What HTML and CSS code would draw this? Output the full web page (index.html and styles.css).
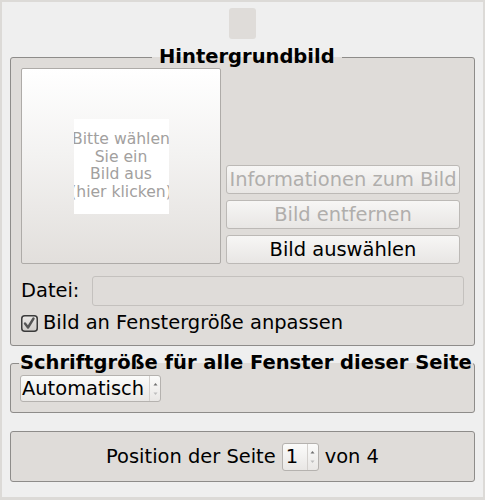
FILE: index.html
```html
<!DOCTYPE html>
<html lang="de">
<head>
<meta charset="utf-8">
<title>Hintergrundbild</title>
<link rel="stylesheet" href="styles.css">
</head>
<body>
<div class="window">
  <div class="top-square"></div>

  <fieldset class="group group-bg">
    <legend class="legend-center">Hintergrundbild</legend>
    <div class="row-top">
      <div class="picture">
        <div class="picture-label">
          <div class="pl-line"><span>Bitte wählen</span></div>
          <div class="pl-line"><span>Sie ein</span></div>
          <div class="pl-line"><span>Bild aus</span></div>
          <div class="pl-line"><span>(hier klicken)</span></div>
        </div>
      </div>
      <div class="buttons">
        <div class="btn disabled">Informationen zum Bild</div>
        <div class="btn disabled">Bild entfernen</div>
        <div class="btn">Bild auswählen</div>
      </div>
    </div>
    <div class="file-row">
      <span class="file-label">Datei:</span>
      <div class="file-input"></div>
    </div>
    <div class="check-row">
      <svg class="checkbox" width="17" height="17" viewBox="0 0 17 17">
        <defs>
          <linearGradient id="cbg" x1="0" y1="0" x2="0" y2="1">
            <stop offset="0" stop-color="#ebe9e7"/>
            <stop offset="1" stop-color="#cfccc9"/>
          </linearGradient>
        </defs>
        <rect x="0.75" y="0.75" width="15.5" height="15.5" rx="3" fill="url(#cbg)" stroke="#3b3b3b" stroke-width="1.5"/>
        <path d="M4 8.5 L7 12.5 L12.5 3.5" fill="none" stroke="#555" stroke-width="2.4" stroke-linecap="round" stroke-linejoin="round"/>
      </svg>
      <span>Bild an Fenstergröße anpassen</span>
    </div>
  </fieldset>

  <fieldset class="group group-font">
    <legend class="legend-left">Schriftgröße für alle Fenster dieser Seite</legend>
    <div class="spin combo">
      <span class="spin-val">Automatisch</span>
      <span class="spin-arrows">
        <svg width="9" height="20" viewBox="0 0 9 20">
          <path d="M2.5 6.5 L4.5 4 L6.5 6.5 Z" fill="#6f6f6f"/>
          <path d="M2.5 13.5 L4.5 16 L6.5 13.5 Z" fill="#bdbdbd"/>
        </svg>
      </span>
    </div>
  </fieldset>

  <div class="position-box">
    <span>Position der Seite</span>
    <div class="spin num">
      <span class="spin-val">1</span>
      <span class="spin-arrows">
        <svg width="9" height="22" viewBox="0 0 9 22">
          <path d="M2.5 7.5 L4.5 5 L6.5 7.5 Z" fill="#6f6f6f"/>
          <path d="M2.5 14.5 L4.5 17 L6.5 14.5 Z" fill="#bdbdbd"/>
        </svg>
      </span>
    </div>
    <span>von 4</span>
  </div>
</div>
</body>
</html>
```

FILE: styles.css
```css
html, body {
  margin: 0;
  padding: 0;
  background: #dcdad7;
}

body {
  font-family: "DejaVu Sans", "Noto Sans", sans-serif;
  font-size: 19.45px;
  line-height: 22px;
  color: #000;
}

.window {
  margin: 2px 2px 3px 2px;
  height: 495px;
  box-sizing: border-box;
  background: #efefef;
  padding: 6px 8px 0 8px;
  display: flex;
  flex-direction: column;
}

.window > * {
  flex-shrink: 0;
}

.top-square {
  align-self: center;
  width: 27px;
  height: 31px;
  border-radius: 3px;
  background: #dfdcd9;
}

.group {
  margin: 0;
  min-inline-size: 0;
  border: 1px solid #8e8c8a;
  border-radius: 3px;
  background: #dfdcd9;
}

.group legend {
  font-weight: bold;
  font-size: 19.5px;
  line-height: 22px;
  padding: 0;
  white-space: nowrap;
}

.group-bg {
  margin-top: 7px;
  padding: 0 10px 11px 10px;
}

.legend-center {
  margin-left: 131px;
  padding: 0 7px !important;
}

.row-top {
  display: flex;
  gap: 5px;
}

.picture {
  width: 200px;
  height: 196px;
  box-sizing: border-box;
  border: 1px solid #aeaba8;
  border-radius: 2px;
  background: linear-gradient(to bottom, #ffffff 0%, #f3f2f1 45%, #e2dfdc 100%);
  display: flex;
  align-items: center;
  justify-content: center;
}

.picture-label {
  width: 95px;
  height: 95px;
  background: #ffffff;
  color: #a2a09e;
  font-size: 15.6px;
  line-height: 17.5px;
  overflow: hidden;
  display: flex;
  flex-direction: column;
  justify-content: center;
}

.pl-line {
  display: flex;
  justify-content: center;
  white-space: nowrap;
}

.pl-line span {
  flex-shrink: 0;
}

.buttons {
  width: 234px;
  display: flex;
  flex-direction: column;
  justify-content: flex-end;
  gap: 6px;
}

.btn {
  height: 29px;
  box-sizing: border-box;
  border: 1px solid #bcb9b6;
  border-radius: 3px;
  background: linear-gradient(to bottom, #f7f6f5, #e8e6e4);
  display: flex;
  align-items: center;
  justify-content: center;
  white-space: nowrap;
  overflow: hidden;
}

.btn.disabled {
  color: #b0aeac;
}

.file-row {
  margin-top: 12px;
  display: flex;
  align-items: center;
  gap: 13px;
}

.file-input {
  flex: 1;
  height: 30px;
  box-sizing: border-box;
  border: 1px solid #c4c1be;
  border-radius: 3px;
  background: #dfdcd9;
}

.check-row {
  margin-top: 6px;
  display: flex;
  align-items: center;
  gap: 5px;
}

.checkbox {
  display: block;
  flex-shrink: 0;
}

.group-font {
  margin-top: 6px;
  padding: 1px 10px 10px 9px;
}

.legend-left {
  margin-left: -1px;
  padding: 0 1px !important;
}

.spin {
  display: flex;
  align-items: stretch;
  box-sizing: border-box;
  border: 1px solid #b5b2af;
  border-radius: 3px;
  background: linear-gradient(to bottom, #fbfbfa, #e9e7e5);
}

.combo {
  width: 141px;
  height: 27px;
}

.combo .spin-val {
  flex: 1;
  padding-left: 1px;
  line-height: 25px;
  white-space: nowrap;
}

.spin-arrows {
  width: 10px;
  border-left: 1px solid #d3d0cd;
  display: flex;
  align-items: center;
  justify-content: center;
}

.spin-arrows svg {
  display: block;
}

.position-box {
  margin-top: 18px;
  height: 51px;
  box-sizing: border-box;
  border: 1px solid #8e8c8a;
  border-radius: 3px;
  background: #dfdcd9;
  display: flex;
  align-items: center;
  justify-content: center;
  gap: 5px;
}

.num {
  width: 37px;
  height: 28px;
  margin: 0 1px;
}

.num .spin-val {
  flex: 1;
  padding-left: 3px;
  line-height: 26px;
}
```
